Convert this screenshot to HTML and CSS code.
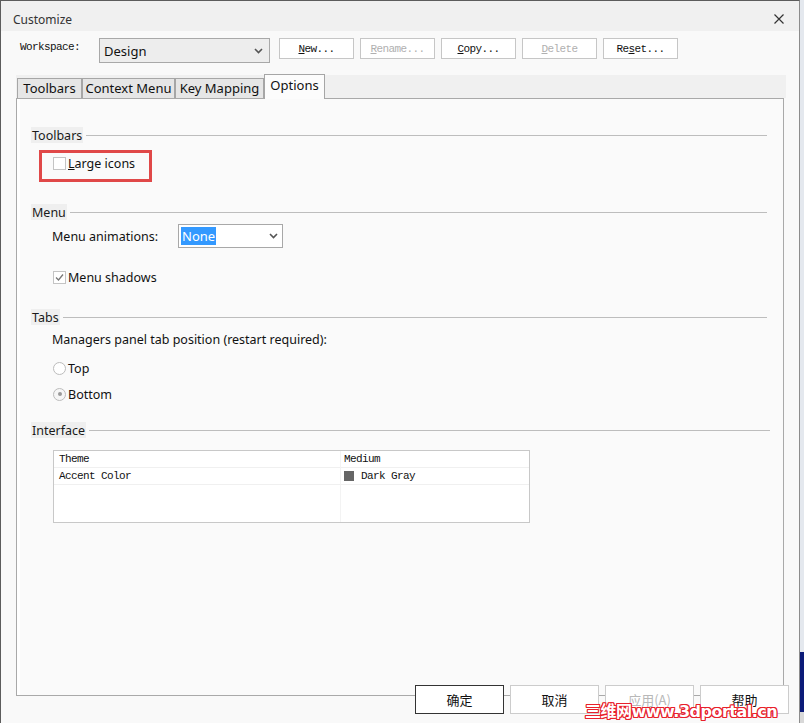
FILE: index.html
```html
<!DOCTYPE html>
<html>
<head>
<meta charset="utf-8">
<link rel="stylesheet" href="styles.css">
</head>
<body>
<div class="page">
  <div class="dialog">
    <div class="titlebar">
      <span class="title">Customize</span>
      <svg class="close" width="10" height="10" viewBox="0 0 10 10"><path d="M0.5 0.5 L9.5 9.5 M9.5 0.5 L0.5 9.5" stroke="#333" stroke-width="1.2" fill="none"/></svg>
    </div>
    <div class="content">
      <div class="ws-row">
        <span class="ws-label">Workspace:</span>
        <div class="ws-select"><span>Design</span><svg width="9" height="6" viewBox="0 0 9 6"><path d="M1 1 L4.5 4.5 L8 1" stroke="#555" stroke-width="1.6" fill="none"/></svg></div>
        <div class="ws-buttons">
          <button class="mbtn"><u>N</u>ew...</button>
          <button class="mbtn disabled"><u>R</u>ename...</button>
          <button class="mbtn"><u>C</u>opy...</button>
          <button class="mbtn disabled"><u>D</u>elete</button>
          <button class="mbtn">Re<u>s</u>et...</button>
        </div>
      </div>
      <div class="tabstrip">
        <div class="tab t1">Toolbars</div>
        <div class="tab t2">Context Menu</div>
        <div class="tab t3">Key Mapping</div>
        <div class="tab t4 active">Options</div>
      </div>
      <div class="panel">
        <div class="hdr h1"><span class="hdr-label">Toolbars</span><span class="hdr-line"></span></div>
        <div class="redbox">
          <div class="opt"><span class="cb"></span><span><u>L</u>arge icons</span></div>
        </div>
        <div class="hdr h2"><span class="hdr-label">Menu</span><span class="hdr-line"></span></div>
        <div class="item anim">
          <span class="anim-label">Menu animations:</span>
          <div class="sel"><span class="sel-hl">None</span><svg width="9" height="6" viewBox="0 0 9 6"><path d="M1 1 L4.5 4.5 L8 1" stroke="#555" stroke-width="1.6" fill="none"/></svg></div>
        </div>
        <div class="item opt shadows"><span class="cb"><svg width="11" height="11" viewBox="0 0 11 11"><path d="M2 5.5 L4.5 8 L9 2.5" stroke="#777" stroke-width="1.3" fill="none"/></svg></span><span>Menu shadows</span></div>
        <div class="hdr h3"><span class="hdr-label">Tabs</span><span class="hdr-line"></span></div>
        <div class="item managers">Managers panel tab position (restart required):</div>
        <div class="item opt top"><span class="rb"></span><span>Top</span></div>
        <div class="item opt bottom"><span class="rb on"><span class="dot"></span></span><span>Bottom</span></div>
        <div class="hdr h4"><span class="hdr-label">Interface</span><span class="hdr-line"></span></div>
        <div class="grid">
          <div class="cell c1">Theme</div>
          <div class="cell c2">Medium</div>
          <div class="cell c1">Accent Color</div>
          <div class="cell c2"><span class="swatch"></span>Dark Gray</div>
          <div class="cell c1 empty"></div>
          <div class="cell c2 empty"></div>
        </div>
      </div>
      <div class="footer">
        <button class="fbtn default">确定</button>
        <button class="fbtn">取消</button>
        <button class="fbtn disabled">应用(A)</button>
        <button class="fbtn">帮助</button>
      </div>
    </div>
    <div class="watermark">三维网www.3dportal.cn</div>
  </div>
  <div class="side"></div>
</div>
</body>
</html>
```

FILE: styles.css
```css
html, body {
  margin: 0;
  padding: 0;
  background: #ffffff;
}

.page {
  display: flex;
  width: 804px;
  height: 723px;
  overflow: hidden;
  font-family: "Noto Sans", "Noto Sans CJK SC", sans-serif;
  font-size: 12.5px;
  color: #111;
}

.dialog {
  width: 800px;
  height: 723px;
  box-sizing: border-box;
  border-left: 1px solid #5c5c5c;
  border-top: 1px solid #5c5c5c;
  border-right: 1px solid #8c8c8c;
  background: #f9f9f9;
  position: relative;
  display: flex;
  flex-direction: column;
}

.side {
  width: 4px;
  height: 723px;
  background: linear-gradient(#e4e8ee 0, #e4e8ee 652px, #0b1a78 652px, #0b1a78 712px, #d8d8d8 712px);
}

/* title bar */
.titlebar {
  height: 30px;
  box-sizing: border-box;
  padding: 6px 15px 0 12px;
  background: #f0f0f0;
  display: flex;
  align-items: center;
  justify-content: space-between;
}

.title {
  font-size: 12px;
  color: #333;
}

.content {
  display: flex;
  flex-direction: column;
}

/* workspace row */
.ws-row {
  display: flex;
  align-items: flex-start;
  margin-top: 7px;
  padding-left: 19px;
}

.ws-label {
  width: 79px;
  height: 21px;
  line-height: 19px;
  font-family: "Liberation Mono", monospace;
  font-size: 11px;
  letter-spacing: -0.6px;
  color: #111;
}

.ws-select {
  width: 171px;
  height: 25px;
  box-sizing: border-box;
  border: 1px solid #a8a8a8;
  background: #ededed;
  display: flex;
  align-items: center;
  justify-content: space-between;
  padding: 1px 6px 0 4px;
  font-size: 13px;
}

.ws-buttons {
  display: flex;
  gap: 6px;
  margin-left: 9px;
}

.mbtn {
  width: 75px;
  height: 21px;
  box-sizing: border-box;
  border: 1px solid #c6c6c6;
  background: #fff;
  padding: 0;
  font-family: "Liberation Mono", monospace;
  font-size: 11px;
  letter-spacing: -0.6px;
  color: #111;
}

.mbtn.disabled {
  color: #b0b0b0;
}

/* tabs */
.tabstrip {
  margin-top: 12px;
  margin-left: 15px;
  width: 770px;
  height: 23px;
  background: #f0f0f0;
  display: flex;
  align-items: flex-end;
  padding-left: 1px;
  box-sizing: border-box;
  position: relative;
  z-index: 1;
}

.tab {
  height: 20px;
  box-sizing: border-box;
  border: 1px solid #a6a6a6;
  border-bottom: none;
  background: #e6e6e6;
  font-size: 13px;
  line-height: 19px;
  text-align: center;
}

.t1 { width: 65px; }
.t2 { width: 93px; }
.t3 { width: 89px; }
.t4 { width: 61px; }

.tab.active {
  height: 25px;
  margin-bottom: -1px;
  background: #fcfcfc;
  line-height: 21px;
}

/* panel */
.panel {
  margin-left: 15px;
  width: 768px;
  height: 598px;
  box-sizing: border-box;
  border: 1px solid #a9a9a9;
  background: #fafafa;
  box-shadow: inset 3px 0 0 #ffffff;
  padding-left: 14px;
  display: flex;
  flex-direction: column;
}

.hdr {
  display: flex;
  align-items: center;
  height: 16px;
  margin-right: 16px;
}

.hdr-label {
  background: #efefef;
  padding: 1px 1px 0;
  height: 16px;
  box-sizing: border-box;
  line-height: 16px;
  color: #1a1a1a;
}

.hdr-line {
  flex: 1;
  height: 1px;
  margin-left: 3px;
  margin-top: 1px;
  background: #bdbdbd;
}

.h1 { margin-top: 28px; }
.h2 { margin-top: 22px; }
.h3 { margin-top: 24px; }
.h4 { margin-top: 20px; margin-right: 13px; }

.redbox {
  margin-top: 7px;
  margin-left: 8px;
  width: 113px;
  height: 32px;
  box-sizing: border-box;
  border: 3px solid #e04848;
  padding: 2px 0 0 11px;
}

.opt {
  display: flex;
  align-items: center;
  height: 16px;
  gap: 2px;
}

.cb {
  width: 13px;
  height: 13px;
  box-sizing: border-box;
  border: 1px solid #c4c4c4;
  background: #fff;
  display: flex;
  align-items: center;
  justify-content: center;
}

.rb {
  width: 13px;
  height: 13px;
  box-sizing: border-box;
  border: 1px solid #bcbcbc;
  border-radius: 50%;
  background: #fff;
  display: flex;
  align-items: center;
  justify-content: center;
}

.rb.on {
  background: #f6f6f6;
}

.dot {
  width: 4px;
  height: 4px;
  border-radius: 50%;
  background: #9a9a9a;
}

.item {
  margin-left: 22px;
}

.anim {
  margin-top: 4px;
  margin-left: 21px;
  height: 24px;
  display: flex;
  align-items: center;
}

.anim-label {
  width: 126px;
}

.sel {
  width: 105px;
  height: 24px;
  box-sizing: border-box;
  border: 1px solid #a8a8a8;
  background: #fff;
  display: flex;
  align-items: center;
  justify-content: space-between;
  padding: 0 4px 0 2px;
  font-size: 13px;
}

.sel-hl {
  background: #3399ff;
  color: #fff;
  height: 18px;
  line-height: 18px;
  padding: 0 1px;
}

.shadows {
  margin-top: 21px;
}

.managers {
  margin-top: 6px;
  margin-left: 21px;
  height: 16px;
  line-height: 17px;
}

.top { margin-top: 13px; }
.bottom { margin-top: 10px; }

/* interface grid */
.grid {
  margin-top: 12px;
  margin-left: 22px;
  width: 477px;
  height: 73px;
  box-sizing: border-box;
  border: 1px solid #c8c8c8;
  background: #fff;
  display: grid;
  grid-template-columns: 287px 1fr;
  grid-template-rows: 17px 17px 1fr;
  font-family: "Liberation Mono", monospace;
  font-size: 11px;
  letter-spacing: -0.6px;
  color: #111;
}

.cell {
  border-bottom: 1px solid #f0f0f0;
  line-height: 16px;
  display: flex;
  align-items: center;
}

.cell.c1 {
  padding-left: 5px;
  border-right: 1px solid #f3f3f3;
}

.cell.c2 {
  padding-left: 3px;
}

.cell.empty {
  border-bottom: none;
}

.swatch {
  width: 10px;
  height: 10px;
  background: #666;
  margin-right: 7px;
}

/* footer */
.footer {
  margin-top: -11px;
  height: 29px;
  display: flex;
  justify-content: flex-end;
  gap: 6px;
  padding-right: 10px;
  position: relative;
  z-index: 2;
}

.fbtn {
  width: 89px;
  height: 29px;
  box-sizing: border-box;
  border: 1px solid #cccccc;
  background: #fff;
  padding: 0;
  font-family: "Noto Sans CJK SC", sans-serif;
  font-size: 13px;
  color: #111;
}

.fbtn.default {
  border: 1px solid #333;
}

.fbtn.disabled {
  color: #b8b8b8;
}

/* watermark overlay */
.watermark {
  position: absolute;
  left: 584px;
  top: 701px;
  height: 19px;
  line-height: 19px;
  font-family: "DejaVu Sans", "Noto Sans CJK SC", sans-serif;
  font-weight: bold;
  font-size: 16px;
  letter-spacing: -0.5px;
  color: #fff;
  z-index: 5;
  text-shadow: 1px 0 0 #e8202a, -1px 0 0 #e8202a, 0 1px 0 #e8202a, 0 -1px 0 #e8202a, 1px 1px 0 #e8202a, -1px -1px 0 #e8202a, 1px -1px 0 #e8202a, -1px 1px 0 #e8202a;
}
```
